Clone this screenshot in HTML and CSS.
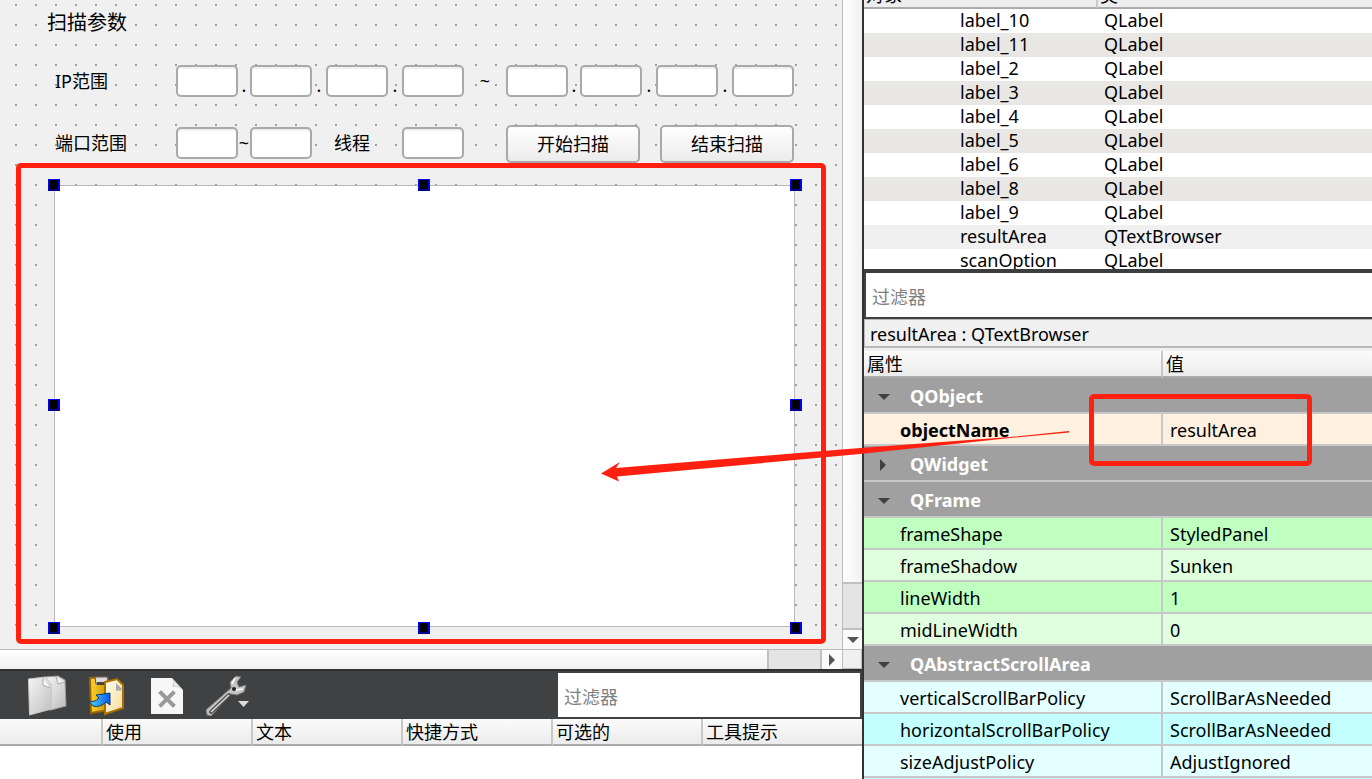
FILE: index.html
```html
<!DOCTYPE html>
<html lang="zh-CN">
<head>
<meta charset="utf-8">
<title>Qt Designer</title>
<link rel="stylesheet" href="styles.css">
</head>
<body>
<div class="app">
  <main class="left">
    <div class="workspace">
      <form class="canvas">
        <h1 class="form-title">扫描参数</h1>
        <div class="fields">
          <label class="name" for="ip1">IP范围</label>
          <input class="box" id="ip1" type="text">
          <span class="dot">.</span>
          <input class="box" type="text" aria-label="IP 2">
          <span class="dot">.</span>
          <input class="box" type="text" aria-label="IP 3">
          <span class="dot">.</span>
          <input class="box" type="text" aria-label="IP 4">
          <span class="tilde">~</span>
          <input class="box" type="text" aria-label="IP 5">
          <span class="dot">.</span>
          <input class="box" type="text" aria-label="IP 6">
          <span class="dot">.</span>
          <input class="box" type="text" aria-label="IP 7">
          <span class="dot">.</span>
          <input class="box" type="text" aria-label="IP 8">

          <label class="name" for="port1">端口范围</label>
          <input class="box" id="port1" type="text">
          <span class="tilde">~</span>
          <input class="box" type="text" aria-label="端口 2">
          <label class="threads" for="threads">线程</label>
          <input class="box" id="threads" type="text">
          <button class="push start" type="button">开始扫描</button>
          <button class="push stop" type="button">结束扫描</button>
        </div>
        <div class="result">
          <textarea class="result-text" aria-label="resultArea" readonly></textarea>
          <i class="handle tl"></i><i class="handle tc"></i><i class="handle tr"></i>
          <i class="handle ml"></i><i class="handle mr"></i>
          <i class="handle bl"></i><i class="handle bc"></i><i class="handle br"></i>
          <div class="mark mark-result"></div>
        </div>
      </form>
      <div class="vbar">
        <div class="vbar-thumb"></div>
        <div class="vbar-track"></div>
        <button class="vbar-step" type="button" aria-label="向下"><svg width="12" height="6" viewBox="0 0 12 6"><path d="M0 0h12L6 6z" fill="#555"/></svg></button>
      </div>
      <div class="hbar">
        <div class="hbar-thumb"></div>
        <div class="hbar-track"></div>
        <button class="hbar-step" type="button" aria-label="向右"><svg width="6" height="12" viewBox="0 0 6 12"><path d="M0 0v12L6 6z" fill="#555"/></svg></button>
      </div>
      <div class="corner"></div>
    </div>
    <div class="toolbar">
      <div class="tools">
        <button class="tool" type="button" aria-label="复制">
          <svg viewBox="28 672 40 44"><defs><linearGradient id="pg" x2="1" y2="1"><stop stop-color="#f6f6f6"/><stop offset="1" stop-color="#bdbdbd"/></linearGradient></defs>
            <path d="M45 676l13-1 7 4 1 26-15 4-6-1z" fill="url(#pg)" stroke="#999"/><path d="M56 676l2 7 7-2" fill="#eee" stroke="#aaa"/>
            <path d="M28.500 678l17-2 6 8v24l-22 6z" fill="url(#pg)" stroke="#c8c8c8"/><path d="M43 677v7l7 3" fill="#fafafa" stroke="#aaa"/></svg>
        </button>
        <button class="tool" type="button" aria-label="粘贴">
          <svg viewBox="88 672 40 44"><defs><linearGradient id="gold" x2="1"><stop stop-color="#ffd52e"/><stop offset="1" stop-color="#c48d06"/></linearGradient><linearGradient id="cream" x2="1" y2="1"><stop stop-color="#fffdf0"/><stop offset="1" stop-color="#f6dc96"/></linearGradient><linearGradient id="blue" x2="1"><stop stop-color="#50d8f8"/><stop offset="1" stop-color="#0758ef"/></linearGradient></defs>
            <path d="M90 677l15-1 4 4v29l-18 3z" fill="url(#gold)" stroke="#9b6500" stroke-width="2"/>
            <path d="M95 676h13l-1 7H96z" fill="#ddd" stroke="#555"/><path d="M97 681h8v3h-8z" fill="#444"/>
            <path d="M105 681l12-3 6 6v23l-18 6z" fill="url(#cream)" stroke="#a96d00" stroke-width="2"/>
            <path d="M116 682v8l7-1z" fill="#aaa"/>
            <path d="M89 700q5 2 10-3l-3-3 14-2v12l-4-3q-6 6-13 4z" fill="url(#blue)" stroke="#103e65"/></svg>
        </button>
        <button class="tool" type="button" aria-label="删除">
          <svg viewBox="148 672 40 44"><path d="M151 677h21l11 12v24h-32z" fill="#f7f7f7"/><path d="M172 677q3 4 0 9 6-2 11 3z" fill="#c7c7c7"/><path d="M173 679q2 3 1 6 4-1 7 2z" fill="#eee"/><path d="M161 692l12 12m0-12l-12 12" stroke="#999" stroke-width="4" stroke-linecap="square"/></svg>
        </button>
        <button class="tool" type="button" aria-label="配置">
          <svg viewBox="208 672 40 44"><path d="M236 675l5 1-4 5 2 5 7-2-2 7-7 3-6-1-20 22-4-1-1-5 25-22-1-6z" fill="#c4c4c4" stroke="#777"/><path d="M229 694l-18 17" stroke="#505050" stroke-width="4" stroke-linecap="round"/><path d="M229 694l-18 17" stroke="#ddd" stroke-width="1.5"/><path d="M232 683l3-6m0 12l8-1" stroke="#fff" stroke-width="1.5"/><circle cx="234" cy="688" r="2" fill="#222"/><path d="M238 700h11l-5.500 6z" fill="#ddd"/></svg>
        </button>
      </div>
      <input class="filter" type="text" placeholder="过滤器" aria-label="过滤器">
    </div>
    <table class="actions">
      <colgroup><col class="c-name"><col class="c-std"><col class="c-std"><col class="c-std"><col class="c-std"><col></colgroup>
      <thead><tr><th></th><th>使用</th><th>文本</th><th>快捷方式</th><th>可选的</th><th>工具提示</th></tr></thead>
    </table>
  </main>

  <aside class="right">
    <div class="objects">
      <table class="object-table">
        <colgroup><col class="c-object"><col></colgroup>
        <thead><tr><th><div class="clip">对象</div></th><th><div class="clip">类</div></th></tr></thead>
        <tbody>
          <tr><td>label_10</td><td>QLabel</td></tr>
          <tr><td>label_11</td><td>QLabel</td></tr>
          <tr><td>label_2</td><td>QLabel</td></tr>
          <tr><td>label_3</td><td>QLabel</td></tr>
          <tr><td>label_4</td><td>QLabel</td></tr>
          <tr><td>label_5</td><td>QLabel</td></tr>
          <tr><td>label_6</td><td>QLabel</td></tr>
          <tr><td>label_8</td><td>QLabel</td></tr>
          <tr><td>label_9</td><td>QLabel</td></tr>
          <tr class="selected"><td>resultArea</td><td>QTextBrowser</td></tr>
          <tr><td>scanOption</td><td>QLabel</td></tr>
        </tbody>
      </table>
    </div>
    <div class="search"><input class="filter" type="text" placeholder="过滤器" aria-label="过滤器"></div>
    <div class="current">resultArea : QTextBrowser</div>
    <table class="props">
      <colgroup><col class="c-prop"><col></colgroup>
      <thead><tr><th>属性</th><th>值</th></tr></thead>
      <tbody>
        <tr class="group"><th colspan="2"><svg class="fold" viewBox="0 0 12 12"><path d="M0 3h12L6 9z"/></svg>QObject</th></tr>
        <tr class="peach"><td class="strong">objectName</td><td><div class="marked">resultArea<div class="mark mark-name"></div></div></td></tr>
        <tr class="group"><th colspan="2"><svg class="fold" viewBox="0 0 12 12"><path d="M2 0v12l6-6z"/></svg>QWidget</th></tr>
        <tr class="group"><th colspan="2"><svg class="fold" viewBox="0 0 12 12"><path d="M0 3h12L6 9z"/></svg>QFrame</th></tr>
        <tr class="green"><td>frameShape</td><td>StyledPanel</td></tr>
        <tr class="green-light"><td>frameShadow</td><td>Sunken</td></tr>
        <tr class="green"><td>lineWidth</td><td>1</td></tr>
        <tr class="green-light"><td>midLineWidth</td><td>0</td></tr>
        <tr class="group"><th colspan="2"><svg class="fold" viewBox="0 0 12 12"><path d="M0 3h12L6 9z"/></svg>QAbstractScrollArea</th></tr>
        <tr class="cyan-light"><td>verticalScrollBarPolicy</td><td>ScrollBarAsNeeded</td></tr>
        <tr class="cyan"><td>horizontalScrollBarPolicy</td><td>ScrollBarAsNeeded</td></tr>
        <tr class="cyan-light"><td>sizeAdjustPolicy</td><td>AdjustIgnored</td></tr>
      </tbody>
    </table>
  </aside>
  <svg class="arrow" width="470" height="54" viewBox="600 430 470 54" aria-hidden="true"><path d="M1069 431v1.500L1010 438 860 454 617 476.500l2 5-18-8 19-11.500-4 6L860 448l150-11z" fill="#ff2010"/></svg>
</div>
</body>
</html>
```

FILE: styles.css
```css
* { box-sizing: border-box; }

body {
  margin: 0;
  background: #fff;
  color: #000;
  font-family: "Noto Sans", "Noto Sans CJK SC", sans-serif;
  font-size: 18px;
  line-height: 24px;
}

input, button, textarea { font: inherit; color: inherit; margin: 0; }

.app {
  position: relative;
  display: grid;
  grid-template-columns: minmax(0, 862fr) minmax(0, 510fr);
  grid-template-rows: minmax(0, 1fr);
  height: 100vh;
  overflow: hidden;
}

.left { display: flex; flex-direction: column; min-width: 0; }

/* Form editor */
.workspace {
  flex: 1;
  min-height: 0;
  display: grid;
  grid-template-columns: minmax(0, 1fr) 20px;
  grid-template-rows: minmax(0, 1fr) 20px;
  background: #f0f0f0;
}

.canvas {
  display: flex;
  flex-direction: column;
  padding: 9px 47px 22px 54px;
  background:
    linear-gradient(#f0f0f0, #f0f0f0) 0 100% / 100% 10px no-repeat,
    linear-gradient(90deg, transparent 2px, #f0f0f0 2px) 15px 4px / 20px 20px,
    linear-gradient(#a0a0a0 2px, #f0f0f0 2px) 15px 4px / 20px 20px;
}

.form-title {
  margin: 0 0 28px -7px;
  font-size: 20px;
  font-weight: 400;
  line-height: 28px;
}

.fields {
  display: grid;
  grid-template-columns: 122px 62px 12px 62px 14px 62px 14px 62px 42px 62px 12px 62px 14px 62px 14px 62px;
  grid-template-rows: 32px 36px;
  row-gap: 28px;
  align-items: center;
  margin-bottom: 24px;
}

.name { padding-left: 1px; }
.dot { align-self: end; text-align: center; }
.tilde { text-align: center; }
.threads { grid-column: span 3; padding-left: 22px; }

.box {
  width: 100%;
  height: 32px;
  padding: 0 4px;
  border: 2px solid #a9a9a9;
  border-radius: 5px;
  background: #fff;
  box-shadow: inset 0 2px #f0f0f0;
}

.push {
  align-self: start;
  width: 134px;
  height: 38px;
  padding: 0;
  border: 2px solid #a9a9a9;
  border-radius: 5px;
  background: linear-gradient(#fefefe, #ececec);
}
.start { grid-column: 10 / 13; }
.stop { grid-column: 13 / 17; justify-self: end; }

.result { position: relative; flex: 1; min-height: 0; }
.result-text {
  display: block;
  width: 100%;
  height: 100%;
  padding: 4px;
  border: 1px solid #b9b9b9;
  background: #fff;
  resize: none;
}

.handle {
  position: absolute;
  width: 12px;
  height: 12px;
  border: 1px solid #00f;
  border-right-width: 2px;
  border-bottom: 2px solid #000080;
  background: #000;
}
.tl, .tc, .tr { top: -6px; }
.ml, .mr { top: calc(50% - 7px); }
.bl, .bc, .br { bottom: -7px; }
.tl, .ml, .bl { left: -6px; }
.tc, .bc { left: calc(50% - 7px); }
.tr, .mr, .br { right: -7px; }

.mark {
  position: absolute;
  border: 5px solid #ff2010;
  border-radius: 5px;
  pointer-events: none;
}
.mark-result { inset: -22px -31px -17px -38px; }

/* Scroll bars */
.vbar {
  display: flex;
  flex-direction: column;
  border-left: 1px solid #bbb;
  background: #f0f0f0;
}
.vbar-thumb { flex: 1; border-bottom: 2px solid #c0c0c0; background: linear-gradient(90deg, #fff, #f0f0f0); }
.vbar-track { height: 46px; border-bottom: 2px solid #c0c0c0; background: #e4e4e4; }
.vbar-step, .hbar-step {
  display: flex;
  align-items: center;
  justify-content: center;
  height: 19px;
  padding: 0;
  border: 0;
  background: #fafafa;
}
.hbar { display: flex; border-top: 1px solid #bbb; }
.hbar-thumb { flex: 1; border-right: 2px solid #c0c0c0; background: linear-gradient(#fff, #f0f0f0); }
.hbar-track { width: 53px; border-right: 2px solid #c0c0c0; background: #e4e4e4; }
.hbar-step { width: 20px; }
.corner { border: 1px solid #bbb; }

/* Action editor */
.toolbar {
  display: flex;
  justify-content: space-between;
  height: 50px;
  padding: 2px 2px 2px 28px;
  border-top: 2px solid #303132;
  background: #404142;
}
.tools { display: flex; gap: 20px; }
.tool { width: 40px; height: 44px; padding: 0; border: 0; background: none; }
.tool svg { display: block; width: 40px; height: 44px; overflow: visible; fill: none; }

.filter {
  width: 302px;
  height: 44px;
  padding: 3px 6px 0;
  border: 0;
  background: #fff;
}
.filter::placeholder { color: #808080; opacity: 1; }

table { width: 100%; border-spacing: 0; table-layout: fixed; }
th, td { padding: 0; text-align: left; white-space: nowrap; }

.actions { flex: none; margin-bottom: 33px; }
.c-name { width: 103px; }
.c-std { width: 150px; }
.actions th, .props thead th {
  height: 27px;
  padding: 1px 0 0 3px;
  border-right: 2px solid #c8c8c8;
  border-bottom: 2px solid #aaa;
  background: linear-gradient(#fbfbfb, #ebebeb);
  font-weight: 400;
}
.actions th:last-child, .props th:last-child { border-right: 0; }

/* Object inspector */
.right {
  display: flex;
  flex-direction: column;
  min-width: 0;
  border-left: 2px solid #333;
}
.objects { flex: 1; min-height: 0; overflow: hidden; }
.c-object { width: 234px; }
.object-table th {
  height: 9px;
  border-right: 2px solid #c8c8c8;
  border-bottom: 2px solid #aaa;
  background: #ededed;
  font-weight: 400;
}
.object-table th:last-child { border-right: 0; }
.clip { display: flex; align-items: flex-end; height: 7px; padding-left: 2px; overflow: hidden; }
.object-table td { height: 24px; padding: 0 0 2px 96px; line-height: 22px; }
.object-table td + td { padding-left: 6px; }
.object-table tbody tr:nth-child(even) { background: #e8e7e3; }
.object-table tbody tr.selected { background: #f0f0f0; }

.search {
  height: 50px;
  padding-left: 2px;
  border-top: 4px solid #3c3d3e;
  border-bottom: 2px solid #404142;
  background: #404142;
}
.search .filter { display: block; width: 100%; }

/* Property editor */
.current {
  height: 29px;
  padding-left: 5px;
  border: 1px solid #b8b8b8;
  border-bottom-width: 2px;
  border-right: 0;
  background: #f0f0f0;
  line-height: 28px;
}
.props { border-top: 3px solid #f0f0f0; border-bottom: 1px solid #c4ffff; }
.c-prop { width: 299px; }
.props td { height: 32px; padding: 2px 0 0 36px; border-bottom: 2px solid #c8c8c8; line-height: 28px; }
.props td:first-child { border-right: 2px solid #c8c8c8; }
.props td + td { padding-left: 7px; }
.props .group th {
  height: 36px;
  padding: 2px 0 0 14px;
  border-bottom: 2px solid #c8c8c8;
  background: #a0a0a0;
  color: #fff;
  font-weight: 700;
}
.fold { width: 12px; height: 12px; margin-right: 20px; fill: #404040; }
.strong { font-weight: 700; }
.peach { background: #fff0df; }
.green { background: #bfffbf; }
.green-light { background: #dfffdf; }
.cyan { background: #c4ffff; }
.cyan-light { background: #e4ffff; }
.marked { position: relative; }
.mark-name { left: -81px; top: -22px; width: 223px; height: 72px; }

.arrow { position: absolute; left: 600px; top: 430px; pointer-events: none; }
```
